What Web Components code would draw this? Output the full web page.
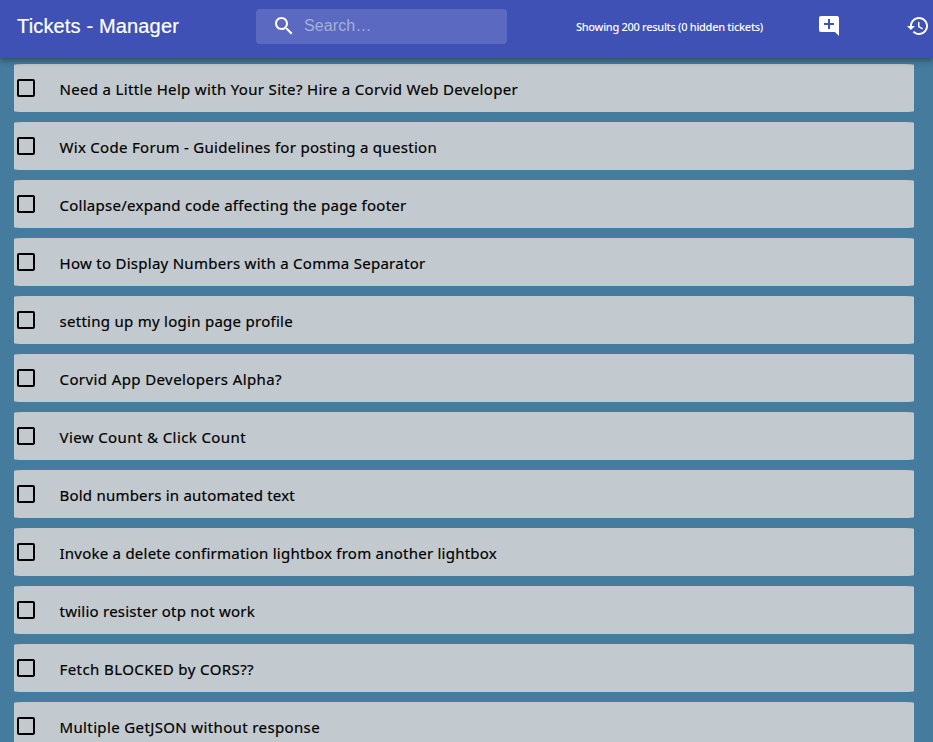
<!DOCTYPE html>
<html lang="en"><head><meta charset="utf-8"><title>Tickets - Manager</title>
<style>html,body{margin:0;height:742px;overflow:hidden;background:#457b9d}</style></head>
<body>
<ticket-app></ticket-app>
<script>
class FitText extends HTMLElement{
  connectedCallback(){
    const r=this.attachShadow({mode:'open'});
    r.innerHTML='<style>:host{display:block;white-space:nowrap}span{display:inline-block}</style><span><slot></slot></span>';
    const s=r.querySelector('span'),n=this.textContent.length;
    s.style.letterSpacing=((+this.getAttribute('width')-s.getBoundingClientRect().width)/n)+'px';
  }
}
class TicketBar extends HTMLElement{
  connectedCallback(){
    this.attachShadow({mode:'open'}).innerHTML=`<style>
:host{display:flex;align-items:flex-start;box-sizing:border-box;height:58px;background:#3f51b5;color:#fff;position:relative;z-index:1;box-shadow:0 2px 4px -1px rgba(0,0,0,.2),0 4px 5px rgba(0,0,0,.14),0 1px 10px rgba(0,0,0,.12)}
.title{margin:11px 0 0 17px;width:239px;font:20px/30px "Liberation Sans",Arial,sans-serif;-webkit-text-stroke:.2px #fff}
.search{margin-top:9px;box-sizing:border-box;width:251px;height:35px;border-radius:4px;background:rgba(255,255,255,.15);display:flex;align-items:center;padding-left:16px}
.search svg{margin-bottom:2px}
.hint{margin:0 0 2px 8px;font:16px/20px "Liberation Sans",Arial,sans-serif;color:#a4b1d8}
.count{margin:17px 0 0 69px;width:241px;font:500 11px/20px "Noto Sans",sans-serif}
svg{display:block;fill:currentColor;flex:none}
.add{margin-top:14px}.hist{margin:14px 0 0 65px}
</style>
<fit-text class="title" width="162">Tickets - Manager</fit-text>
<div class="search"><svg width="24" height="24" viewBox="0 0 24 24"><path d="M15.5 14h-.79l-.28-.27C15.41 12.59 16 11.11 16 9.5 16 5.91 13.09 3 9.5 3S3 5.91 3 9.5 5.91 16 9.5 16c1.61 0 3.09-.59 4.23-1.57l.27.28v.79l5 4.99L20.49 19l-4.99-5zm-6 0C7.01 14 5 11.99 5 9.5S7.01 5 9.5 5 14 7.01 14 9.5 11.99 14 9.5 14z"/></svg><fit-text class="hint" width="67.5">Search…</fit-text></div>
<fit-text class="count" width="187">Showing 200 results (0 hidden tickets)</fit-text>
<svg class="add" width="24" height="24" viewBox="0 0 24 24"><path d="M22 4c0-1.1-.9-2-2-2H4c-1.1 0-2 .9-2 2v12c0 1.1.9 2 2 2h14l4 4V4zm-5 7h-4v4h-2v-4H7V9h4V5h2v4h4v2z"/></svg>
<svg class="hist" width="24" height="24" viewBox="0 0 24 24"><path d="M13 3c-4.97 0-9 4.03-9 9H1l3.89 3.89.07.14L9 12H6c0-3.87 3.13-7 7-7s7 3.13 7 7-3.13 7-7 7c-1.93 0-3.68-.79-4.94-2.06l-1.42 1.42C8.27 19.99 10.51 21 13 21c4.97 0 9-4.03 9-9s-4.03-9-9-9zm-1 5v5l4.28 2.54.72-1.21-3.5-2.08V8H12z"/></svg>`;
  }
}
class TicketRow extends HTMLElement{
  connectedCallback(){
    this.attachShadow({mode:'open'}).innerHTML=`<style>
:host{display:flex;box-sizing:border-box;width:900px;height:48px;flex:none;background:#c3cacf;border-radius:10px/1px;color:#000}
svg{display:block;flex:none;margin:12px 0 0 0}
fit-text{margin:14px 0 0 21.5px;font:400 15px/22px "Noto Sans",sans-serif;-webkit-text-stroke:.2px #000}
</style><svg width="24" height="24" viewBox="0 0 24 24"><path d="M19 5v14H5V5h14m0-2H5c-1.1 0-2 .9-2 2v14c0 1.1.9 2 2 2h14c1.1 0 2-.9 2-2V5c0-1.1-.9-2-2-2z"/></svg><fit-text></fit-text>`;
  }
  set data([text,width]){
    const old=this.shadowRoot.querySelector('fit-text'),f=document.createElement('fit-text');
    f.textContent=text;f.setAttribute('width',width);old.replaceWith(f);
  }
}
class TicketApp extends HTMLElement{
  connectedCallback(){
    const r=this.attachShadow({mode:'open'});
    r.innerHTML=`<style>:host{display:block;height:742px;overflow:hidden}main{display:flex;flex-direction:column;gap:10px;padding:6px 0 0 14px}</style><ticket-bar></ticket-bar><main></main>`;
    const m=r.querySelector('main');
    for(const d of [
      ['Need a Little Help with Your Site? Hire a Corvid Web Developer',458.5],
      ['Wix Code Forum - Guidelines for posting a question',377.5],
      ['Collapse/expand code affecting the page footer',347],
      ['How to Display Numbers with a Comma Separator',366],
      ['setting up my login page profile',233.5],
      ['Corvid App Developers Alpha?',222.5],
      ['View Count & Click Count',186.5],
      ['Bold numbers in automated text',235.5],
      ['Invoke a delete confirmation lightbox from another lightbox',437.5],
      ['twilio resister otp not work',195.5],
      ['Fetch BLOCKED by CORS??',194.5],
      ['Multiple GetJSON without response',260.5]]){
      const e=document.createElement('ticket-row');m.append(e);e.data=d;
    }
  }
}
customElements.define('fit-text',FitText);
customElements.define('ticket-bar',TicketBar);
customElements.define('ticket-row',TicketRow);
customElements.define('ticket-app',TicketApp);
</script></body></html>
